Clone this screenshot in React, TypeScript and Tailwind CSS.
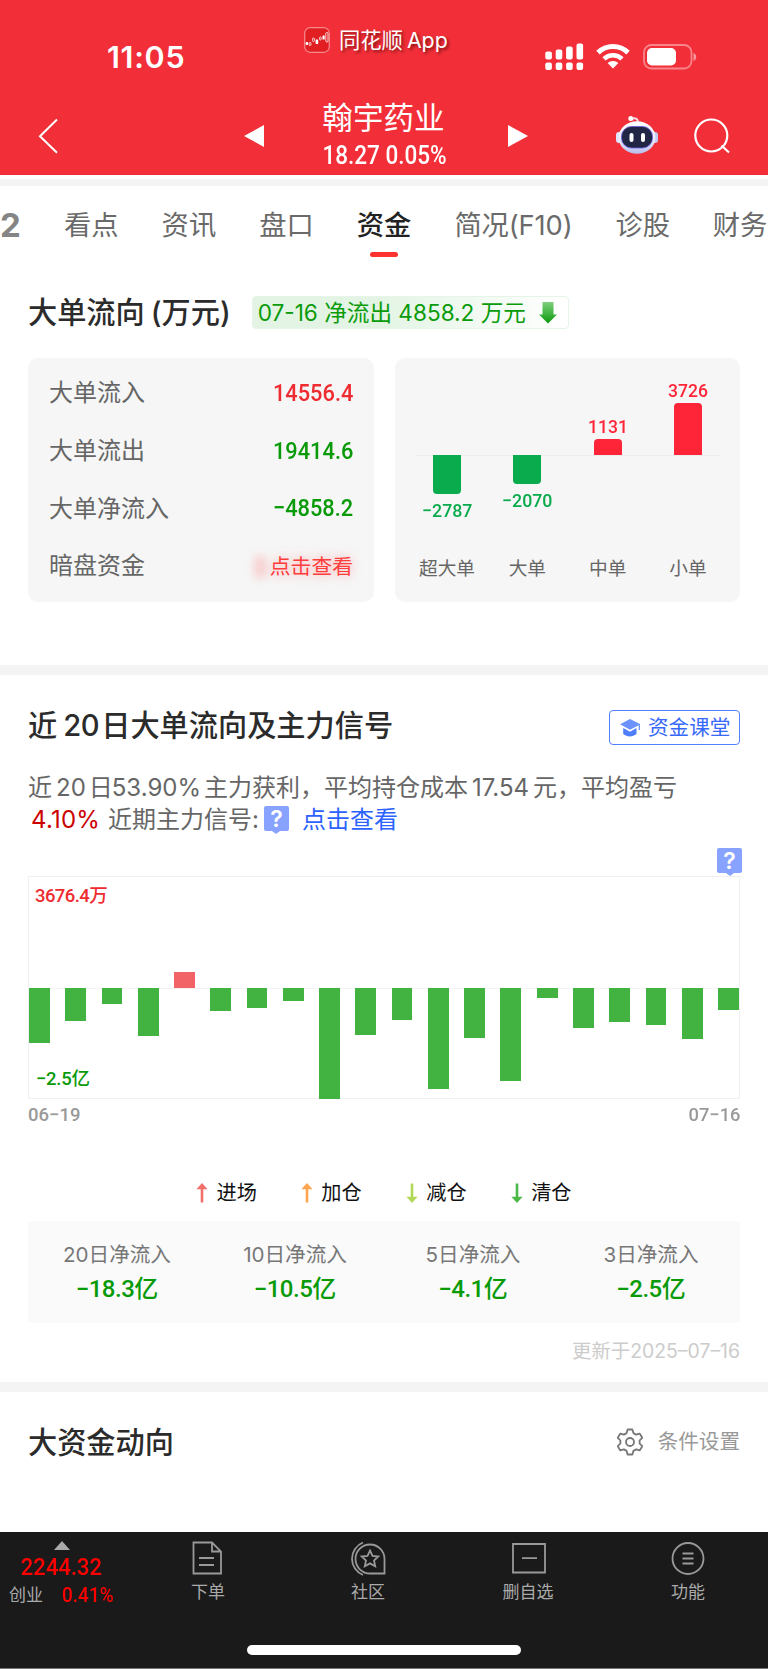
import type { ReactNode } from 'react';
import clsx from 'clsx';

const tabsBefore = ['看点', '资讯', '盘口'];
const tabsAfter = ['简况(F10)', '诊股', '财务'];

const flowRows = [
  { label: '大单流入', value: '14556.4', color: 'text-[#ee2b30]' },
  { label: '大单流出', value: '19414.6', color: 'text-[#089a08]' },
  { label: '大单净流入', value: '−4858.2', color: 'text-[#089a08]' },
];

const orderBars = [
  { label: '超大单', value: -2787, height: 39 },
  { label: '大单', value: -2070, height: 29 },
  { label: '中单', value: 1131, height: 16 },
  { label: '小单', value: 3726, height: 52 },
];

// bar heights in px, positive values go above the zero line
const dailyFlow = [
  -55, -33, -16, -47.5, 16.5, -23, -19.5, -13, -111, -46.5,
  -31.5, -101, -50, -93, -10, -40, -33.5, -37, -51, -21.5,
];

const legend = [
  { label: '进场', color: '#f2706c', up: true },
  { label: '加仓', color: '#ffa550', up: true },
  { label: '减仓', color: '#b1d857', up: false },
  { label: '清仓', color: '#4cb848', up: false },
];

const summary = [
  { label: '20日净流入', value: '−18.3' },
  { label: '10日净流入', value: '−10.5' },
  { label: '5日净流入', value: '−4.1' },
  { label: '3日净流入', value: '−2.5' },
];

const NUM = "font-['Roboto','Noto_Sans_CJK_SC',sans-serif] font-medium";

function SignalIcon() {
  const bars = [8, 10, 13, 16];
  return (
    <svg width="39" height="28" viewBox="0 0 39 28" fill="#fff">
      {bars.map((h, i) => (
        <g key={h}>
          <rect x={0.3 + i * 10.4} y={16.5 - h} width="6.6" height={h} rx="2" />
          <rect x={0.3 + i * 10.4} y="19.5" width="6.6" height="7.4" rx="2" />
        </g>
      ))}
    </svg>
  );
}

function WifiIcon() {
  return (
    <svg width="34" height="25" viewBox="0 0 34 25" fill="none" stroke="#fff">
      <path d="M2 8.6a21.5 21.5 0 0 1 30 0" strokeWidth="5" />
      <path d="M8 14.8a13 13 0 0 1 18 0" strokeWidth="4.6" />
      <path d="M17 24.5l-5.4-5.4a7.8 7.8 0 0 1 10.8 0z" fill="#fff" stroke="none" />
    </svg>
  );
}

function BatteryIcon() {
  return (
    <svg width="54" height="26" viewBox="0 0 54 26" fill="none">
      <rect x="1" y="1" width="47.5" height="23.5" rx="7.5" stroke="#fff" strokeOpacity=".42" strokeWidth="1.8" />
      <rect x="4" y="4" width="29" height="17.5" rx="5" fill="#fff" />
      <path d="M50.5 9c3.6 1.2 3.6 6.8 0 8z" fill="#fff" fillOpacity=".5" />
    </svg>
  );
}

function AppLogo() {
  return (
    <svg width="26" height="26" viewBox="0 0 26 26" fill="none">
      <rect x=".7" y=".7" width="24.6" height="24.6" rx="5.5" fill="#e11f23" stroke="#f58a8c" strokeWidth="1.2" />
      <g fill="#fff">
        <rect x="1.6" y="15" width="2.6" height="3" rx="1" />
        <rect x="11.6" y="12.5" width="2.6" height="4.5" rx=".5" />
        <rect x="18.5" y="8.5" width="2.2" height="4" rx=".5" />
      </g>
      <g stroke="#fff" strokeWidth=".8">
        <rect x="5.2" y="15.5" width="1.8" height="3" rx=".8" />
        <rect x="8.6" y="11" width="1.8" height="3.5" rx=".8" />
        <rect x="15.6" y="10" width="1.6" height="3" rx=".8" />
        <rect x="21.8" y="5.5" width="2.2" height="9.5" rx="1" />
      </g>
    </svg>
  );
}

function RobotIcon() {
  return (
    <svg width="42" height="40" viewBox="0 0 42 40" fill="none">
      <defs>
        <linearGradient id="shell" x1="0" y1="0" x2="0" y2="1">
          <stop offset="0" stopColor="#fff" />
          <stop offset=".6" stopColor="#e8eafc" />
          <stop offset="1" stopColor="#b7bbea" />
        </linearGradient>
      </defs>
      <path d="M16 3.5c4-1 6 .5 6 4" stroke="#f3d9e6" strokeWidth="2" />
      <circle cx="14.8" cy="3.5" r="2.5" fill="#fff" />
      <rect x="0" y="17" width="6" height="11" rx="3" fill="#dfe3fb" />
      <rect x="36" y="17" width="6" height="11" rx="3" fill="#c3c8f2" />
      <ellipse cx="21" cy="22.5" rx="18.5" ry="16.2" fill="url(#shell)" />
      <rect x="5.5" y="11.5" width="31" height="21.5" rx="10" fill="#212645" stroke="#6a5ae0" strokeWidth=".8" />
      <rect x="13.5" y="18" width="4" height="9" rx="2" fill="#fff" />
      <rect x="25" y="18" width="4" height="9" rx="2" fill="#fff" />
    </svg>
  );
}

function HelpBubble() {
  return (
    <div className="flex h-7 w-[25px] flex-col items-center">
      <div className="h-[25px] w-[25px] rounded-[2px] bg-[#88a2ff] text-center text-[23px] leading-[26px] font-semibold text-white">?</div>
      <svg width="8" height="3" viewBox="0 0 8 3" fill="#88a2ff" className="block">
        <path d="M0 0h8L4 3z" />
      </svg>
    </div>
  );
}

function LegendArrow({ color, up }: { color: string; up: boolean }) {
  return (
    <svg width="12" height="20" viewBox="0 0 12 20" className={up ? '' : 'rotate-180'}>
      <path d="M6 0l5.6 6.2H7.3V19.5H4.7V6.2H.4z" fill={color} />
    </svg>
  );
}

function GearIcon() {
  return (
    <svg width="28" height="28" viewBox="0 0 28 28" fill="none" stroke="#777" strokeWidth="1.8" strokeLinejoin="round">
      <path d="M11.6 1.5h4.8l1 3.6 2.7 1.5 3.7-1 2.4 4.2-2.6 2.7v3l2.6 2.7-2.4 4.2-3.7-1-2.7 1.5-1 3.6h-4.8l-1-3.6-2.7-1.5-3.7 1-2.4-4.2 2.6-2.7v-3L1.8 9.8l2.4-4.2 3.7 1 2.7-1.5z" />
      <circle cx="14" cy="14" r="4" />
    </svg>
  );
}

function StatusBar() {
  return (
    <div className="flex h-[94px] items-start text-white">
      <div className="w-[304px] pt-[39px] pl-[107px] text-[30.5px] leading-[35px] font-semibold tracking-[0.7px]">11:05</div>
      <div className="flex w-[241px] items-center pt-[25px]">
        <AppLogo />
        <span className="ml-[9px] text-[21.3px] leading-[30px] [text-shadow:2px_2px_3px_rgba(60,0,0,0.6)]">
          同花顺<span className="ml-1">App</span>
        </span>
      </div>
      <div className="flex pt-[43px]">
        <SignalIcon />
        <div className="mt-px ml-3"><WifiIcon /></div>
        <div className="mt-px ml-[13px]"><BatteryIcon /></div>
      </div>
    </div>
  );
}

function NavBar() {
  return (
    <div className="flex h-[81px] items-start text-white">
      <svg width="20" height="36" viewBox="0 0 20 36" fill="none" stroke="#fff" strokeWidth="2" className="mt-6 ml-[38px]">
        <path d="M19 1.5L2 18.2 19 34.8" />
      </svg>
      <svg width="20" height="22" viewBox="0 0 20 22" fill="#fff" className="mt-[31px] ml-[186px]">
        <path d="M20 0v22L0 11z" />
      </svg>
      <div className="w-[244px] pr-[5px] text-center">
        <div className="mt-1 text-[30.6px] leading-[40px]">翰宇药业</div>
        <div className={clsx(NUM, 'mt-[3px] ml-0.5 scale-x-90 text-[25px] leading-[30px]')}>18.27 0.05%</div>
      </div>
      <svg width="20" height="22" viewBox="0 0 20 22" fill="#fff" className="mt-[31px]">
        <path d="M0 0v22l20-11z" />
      </svg>
      <div className="mt-[21px] ml-[88px]"><RobotIcon /></div>
      <svg width="38" height="38" viewBox="0 0 38 38" fill="none" stroke="#fff" strokeWidth="2.2" className="mt-6 ml-9">
        <circle cx="17.3" cy="17.5" r="16" />
        <path d="M27.5 27.5l7.5 7" />
      </svg>
    </div>
  );
}

function Tabs() {
  return (
    <div className="flex h-[86px] gap-[43px] pt-5 text-[27.3px] leading-10 whitespace-nowrap text-[#6a6a6a]">
      <div className="w-[21px] text-[33px] leading-[38px] font-bold text-[#858585]">2</div>
      {tabsBefore.map((tab) => (
        <div key={tab}>{tab}</div>
      ))}
      <div className="flex flex-col items-center font-medium text-[#222]">
        资金
        <div className="mt-[6px] h-[5px] w-7 rounded-full bg-[#fd332f]" />
      </div>
      {tabsAfter.map((tab) => (
        <div key={tab} className="tracking-[-0.12px]">{tab}</div>
      ))}
    </div>
  );
}

function SectionTitle({ children }: { children: ReactNode }) {
  return <h2 className="pt-px text-[29.2px] leading-10 font-medium whitespace-nowrap text-[#2b2b2b]">{children}</h2>;
}

function OrderChart() {
  return (
    <div className="h-[244px] w-[345px] rounded-[10px] bg-[#f6f6f6] px-5">
      <div className="relative flex h-[190px] justify-between">
        <div className="absolute inset-x-0 top-[97px] h-px bg-[#ececec]" />
        {orderBars.map((bar) => {
          const up = bar.value > 0;
          return (
            <div key={bar.label} className="relative flex w-[64px] flex-col items-center">
              <div className={clsx('flex h-[97px] flex-col items-center justify-end', NUM)}>
                {up && (
                  <>
                    <div className="scale-x-[0.95] text-[18.5px] leading-[22px] text-[#ff2538]">{bar.value}</div>
                    <div className="mt-px w-7 rounded-t-[4px] bg-[#ff2538]" style={{ height: bar.height }} />
                  </>
                )}
              </div>
              {!up && (
                <div className={clsx('flex flex-col items-center', NUM)}>
                  <div className="w-7 rounded-b-[4px] bg-[#0aab4c]" style={{ height: bar.height }} />
                  <div className="mt-[6px] scale-x-[0.96] text-[18.5px] leading-[22px] text-[#0aab4c]">−{Math.abs(bar.value)}</div>
                </div>
              )}
            </div>
          );
        })}
      </div>
      <div className="mt-px flex justify-between text-[18.7px] leading-10 text-[#666]">
        {orderBars.map((bar) => (
          <div key={bar.label} className="w-[64px] text-center">{bar.label}</div>
        ))}
      </div>
    </div>
  );
}

function FlowSection() {
  return (
    <section className="h-[393px] px-7 pt-5">
      <div className="flex items-center">
        <SectionTitle>
          大单流向<span className="ml-1.5">(万元)</span>
        </SectionTitle>
        <div className="ml-[21px] flex h-[33px] w-[317px] items-center rounded-[4px] border border-[#e6f5e8] bg-linear-to-r from-[#e3f4e4] from-40% to-white pl-[5px] text-[22.6px] whitespace-nowrap text-[#0a9b0a]">
          07-16 净流出 4858.2 万元
          <svg width="18" height="22" viewBox="0 0 18 22" className="ml-[13px]">
            <defs>
              <linearGradient id="down" x1="0" y1="0" x2="0" y2="1">
                <stop offset="0" stopColor="#7fd07f" />
                <stop offset="1" stopColor="#0a990a" />
              </linearGradient>
            </defs>
            <path d="M3.5 0h11v12.5H18L9 21.5 0 12.5h3.5z" fill="url(#down)" />
          </svg>
        </div>
      </div>

      <div className="mt-[25px] flex justify-between">
        <div className="h-[244px] w-[346px] rounded-[10px] bg-[#f6f6f6] px-[21px] pt-[6.5px]">
          {flowRows.map((row) => (
            <div key={row.label} className="flex h-[57.7px] items-center justify-between">
              <span className="text-[24px] text-[#666]">{row.label}</span>
              <span className={clsx(NUM, 'origin-right scale-x-[0.89] text-[24.5px]', row.color)}>{row.value}</span>
            </div>
          ))}
          <div className="flex h-[57.7px] items-center justify-between">
            <span className="text-[24px] text-[#666]">暗盘资金</span>
            <span className="relative text-[20.8px] text-[#ff3d3d]">
              <span className="absolute top-1 -left-4 h-6 w-3 rounded-full bg-[#ff5a5a]/25 blur-[4px]" />
              <span className="relative [text-shadow:0_0_12px_rgba(255,70,70,0.45)]">点击查看</span>
            </span>
          </div>
        </div>
        <OrderChart />
      </div>
    </section>
  );
}

function DailyChart() {
  return (
    <div className="relative h-[223px] border border-[#f0f0f0]">
      <div className="absolute inset-x-0 top-[111px] h-px bg-[#f2f2f2]" />
      <div className="relative flex justify-between">
        {dailyFlow.map((v, i) => (
          <div key={i} className="flex h-[222px] w-[20.8px] flex-col">
            <div className="flex h-[111px] flex-col justify-end">
              {v > 0 && <div className="bg-[#f26367]" style={{ height: v }} />}
            </div>
            {v < 0 && <div className="bg-[#42b340]" style={{ height: -v }} />}
          </div>
        ))}
      </div>
      <div className={clsx(NUM, 'absolute top-[7px] left-[6px] text-[18.5px] leading-6 text-[#ee2b30]')}>
        <span className="tracking-[-0.6px]">3676.4</span>万
      </div>
      <div className={clsx(NUM, 'absolute bottom-[7px] left-[7px] text-[18.5px] leading-6 text-[#089a08]')}>
        <span className="tracking-[-0.3px]">−2.5</span>亿
      </div>
    </div>
  );
}

function SignalSection() {
  return (
    <section className="h-[707px] px-7 pt-[30px]">
      <div className="flex items-center justify-between">
        <SectionTitle>
          近<span className="mr-0.5 ml-1.5 tracking-[-0.4px]">20</span>日大单流向及主力信号
        </SectionTitle>
        <button className="mt-1 flex h-[35px] w-[131px] items-center rounded-[4px] border border-[#5580fb] pl-2.5 text-[20.6px] whitespace-nowrap text-[#3568fb]">
          <svg width="20" height="18" viewBox="0 0 20 18" fill="#6c93fc" className="mr-2">
            <path d="M10 0l10 5v6h-1.3V6.2L10 10.8 0 5.2z" />
            <path d="M3.2 9l6.8 3.8L16.5 9v6c-4 3.3-9.500 3.300-13.300 0z" fill="#4f7efb" />
          </svg>
          <span className="pt-px">资金课堂</span>
        </button>
      </div>

      <div className="mt-[26px] text-[24px] leading-8 whitespace-nowrap text-[#666]">
        <div>
          近<span className="mr-[3px] ml-1">20</span>日<span className="mr-[3px] -ml-px">53.90%</span>主力获利，平均持仓成本<span className="mx-1">17.54</span>元，平均盈亏
        </div>
        <div className="flex items-center pl-[3px]">
          <span className="tracking-[0.2px] text-[#c00]">4.10%</span>
          <span className="ml-2">近期主力信号:</span>
          <span className="ml-[5px]"><HelpBubble /></span>
          <span className="ml-[13px] text-[#2c62ff]">点击查看</span>
        </div>
      </div>

      <div className="-mr-0.5 mt-[12px] flex justify-end"><HelpBubble /></div>
      <DailyChart />
      <div className={clsx(NUM, 'mt-1 flex justify-between text-[18.5px] leading-6 text-[#999]')}>
        <span>06−19</span>
        <span className="origin-right scale-x-[0.99]">07−16</span>
      </div>

      <div className="mt-[51px] flex h-[30px] items-center justify-center gap-[44.5px] text-[20.2px] text-[#111]">
        {legend.map((item) => (
          <div key={item.label} className="flex items-center gap-2">
            <LegendArrow color={item.color} up={item.up} />
            {item.label}
          </div>
        ))}
      </div>

      <div className="mt-[13px] grid h-[102px] grid-cols-4 bg-[#fafafa] pt-[19px] text-center">
        {summary.map((item) => (
          <div key={item.label}>
            <div className="text-[20.6px] leading-[30px] text-[#777]">{item.label}</div>
            <div className={clsx(NUM, 'mt-[3px] text-[24px] leading-[32px] text-[#089a08]')}>
              <span className="tracking-[-0.5px]">{item.value}</span>亿
            </div>
          </div>
        ))}
      </div>
      <div className="mt-[14px] text-right text-[19.4px] leading-[28px] text-[#ccc]">更新于2025–07–16</div>
    </section>
  );
}

function BottomItem({ label, children }: { label: string; children: ReactNode }) {
  return (
    <div className="flex w-40 flex-col items-center text-[17px] text-[#aaa]">
      <svg width="36" height="36" viewBox="0 0 36 36" fill="none" stroke="#999" strokeWidth="1.8" className="mt-2">
        {children}
      </svg>
      <span className="mt-[3px] leading-[26px]">{label}</span>
    </div>
  );
}

function BottomBar() {
  return (
    <footer className="h-[137px] border-b border-[#777] bg-[#1a1a1a]">
      <div className="flex h-[113px]">
        <div className={clsx(NUM, 'w-32 pr-[5px] text-[#f00]')}>
          <svg width="16" height="9" viewBox="0 0 16 9" fill="#aaa" className="mx-auto mt-[9px] block">
            <path d="M8 0l8 9H0z" />
          </svg>
          <div className="mt-[3px] scale-x-90 text-center text-[24.5px] leading-[28px]">2244.32</div>
          <div className="mt-px flex items-center pl-[9px]">
            <span className="pt-px text-[17px] leading-[24px] font-normal text-[#aaa]">创业</span>
            <span className="ml-[19px] origin-left scale-x-[0.95] text-[20px] leading-[24px]">0.41%</span>
          </div>
        </div>
        <BottomItem label="下单">
          <path d="M3.5 2.5h18.5l9 9v22h-27.5zM22 2.5v9h9M9 18h15M9 25h15" />
        </BottomItem>
        <BottomItem label="社区">
          <path d="M34 33.5H20.5a14.5 14.5 0 1 1 14-14.5v14.5z" />
          <path d="M13 2.5a17.5 17.5 0 0 0 0 32.5" />
          <path d="M20 10.5l2.5 5.3 5.8.7-4.3 4 1.2 5.8-5.2-2.9-5.2 2.9 1.2-5.8-4.3-4 5.8-.7z" />
        </BottomItem>
        <BottomItem label="删自选">
          <path d="M3 4h32v28.5H3zM12 18.2h15" />
        </BottomItem>
        <BottomItem label="功能">
          <circle cx="18" cy="18.5" r="15.5" />
          <path d="M12.5 13.5h11M12.5 18.5h11M12.5 23.5h11" />
        </BottomItem>
      </div>
      <div className="mx-auto h-[10px] w-[274px] rounded-full bg-white" />
    </footer>
  );
}

export default function App() {
  return (
    <div className="h-[1669px] w-[768px] overflow-hidden bg-white font-['Inter','Noto_Sans_CJK_SC',sans-serif]">
      <header className="bg-[#f22f38]">
        <StatusBar />
        <NavBar />
      </header>
      <div className="mt-1 h-[7px] bg-[#f4f4f4]" />
      <Tabs />
      <FlowSection />
      <div className="h-[10px] bg-[#f4f4f4]" />
      <SignalSection />
      <div className="h-[10px] bg-[#f4f4f4]" />
      <section className="flex h-[140px] items-start justify-between px-7 pt-[30px]">
        <SectionTitle>大资金动向</SectionTitle>
        <div className="flex items-center gap-3.5 text-[20.6px] leading-10 text-[#999]">
          <GearIcon />
          条件设置
        </div>
      </section>
      <BottomBar />
    </div>
  );
}
